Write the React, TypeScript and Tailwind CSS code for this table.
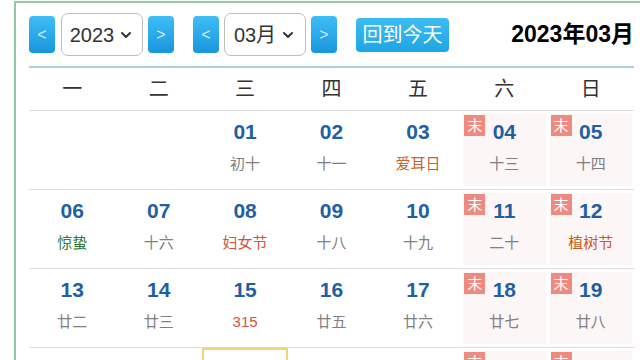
import { ChevronDown } from "lucide-react";

type Day = { d: string; l: string; c?: string };

const weeks: (Day | null)[][] = [
  [null, null, { d: "01", l: "初十" }, { d: "02", l: "十一" }, { d: "03", l: "爱耳日", c: "text-[#c8642d]" }, { d: "04", l: "十三" }, { d: "05", l: "十四" }],
  [{ d: "06", l: "惊蛰", c: "text-[#2f7a3a]" }, { d: "07", l: "十六" }, { d: "08", l: "妇女节", c: "text-[#d4553a]" }, { d: "09", l: "十八" }, { d: "10", l: "十九" }, { d: "11", l: "二十" }, { d: "12", l: "植树节", c: "text-[#c85a22]" }],
  [{ d: "13", l: "廿二" }, { d: "14", l: "廿三" }, { d: "15", l: "315", c: "text-[#d4553a]" }, { d: "16", l: "廿五" }, { d: "17", l: "廿六" }, { d: "18", l: "廿七" }, { d: "19", l: "廿八" }],
  [{ d: "20", l: "廿九" }, { d: "21", l: "三十" }, { d: "22", l: "初一" }, { d: "23", l: "初二" }, { d: "24", l: "初三" }, { d: "25", l: "初四" }, { d: "26", l: "初五" }],
];

const weekdays = ["一", "二", "三", "四", "五", "六", "日"];

function Arrow({ children }: { children: string }) {
  return (
    <div className="flex h-[37px] w-[26px] items-center justify-center rounded-[4px] bg-gradient-to-b from-[#3fbdf6] to-[#1796dd] text-[16px] text-[#d4f0ff]">
      {children}
    </div>
  );
}

function Picker({ label }: { label: string }) {
  return (
    <div className="flex h-[43px] w-[82px] items-center justify-center gap-[4px] rounded-[7px] border border-[#bdbdbd] bg-white text-[20px] text-[#333]">
      <span>{label}</span>
      <ChevronDown size={16} strokeWidth={3} className="text-[#333]" />
    </div>
  );
}

function Cell({ day, col, today }: { day: Day | null; col: number; today: boolean }) {
  const weekend = col >= 5;
  return (
    <div className={`relative h-[78px] ${today ? "border-2 border-[#f3d37a]" : ""}`}>
      {weekend && <div className="absolute inset-x-[2px] inset-y-[3px] bg-[#fdf6f6]" />}
      {day && weekend && (
        <div className="absolute left-[3px] top-[4px] flex h-[21px] w-[21px] items-center justify-center bg-[#ee8a80] text-[15px] leading-none text-white">
          末
        </div>
      )}
      {day && (
        <div className="relative flex flex-col items-center pt-[9px]">
          <div className="text-[21px] font-bold leading-[24px] text-[#1f5fa5]">{day.d}</div>
          <div className={`mt-[10px] text-[15px] leading-[20px] ${day.c ?? "text-[#808080]"}`}>{day.l}</div>
        </div>
      )}
    </div>
  );
}

export default function App() {
  return (
    <div className="h-[360px] w-[640px] overflow-hidden bg-white font-['Liberation_Sans','Noto_Sans_CJK_SC',sans-serif]">
      <div className="ml-[14px] mt-[1px] h-[400px] border-l-2 border-t-2 border-[#93c9ab] pl-[13px] pr-[6px]">
        <div className="flex h-[63px] items-center">
          <Arrow>&lt;</Arrow>
          <div className="ml-[6px]"><Picker label="2023" /></div>
          <div className="ml-[5px]"><Arrow>&gt;</Arrow></div>
          <div className="ml-[19px]"><Arrow>&lt;</Arrow></div>
          <div className="ml-[5px]"><Picker label="03月" /></div>
          <div className="ml-[5px]"><Arrow>&gt;</Arrow></div>
          <div className="ml-[19px] flex h-[34px] w-[93px] items-center justify-center rounded-[4px] bg-gradient-to-b from-[#3cbdf2] to-[#1ea5e4] text-[20px] text-white">
            回到今天
          </div>
          <div className="ml-auto text-[23px] font-bold text-black">2023年03月</div>
        </div>
        <div className="border-t-2 border-[#a9d2dc]">
          <div className="grid h-[43px] grid-cols-7 items-center border-b border-[#dcdcdc] text-center text-[20px] text-[#333]">
            {weekdays.map((w) => (
              <div key={w}>{w}</div>
            ))}
          </div>
          {weeks.map((row, r) => (
            <div key={r} className="grid grid-cols-7 border-b border-[#dcdcdc]">
              {row.map((day, c) => (
                <Cell key={c} day={day} col={c} today={r === 3 && c === 2} />
              ))}
            </div>
          ))}
        </div>
      </div>
    </div>
  );
}
